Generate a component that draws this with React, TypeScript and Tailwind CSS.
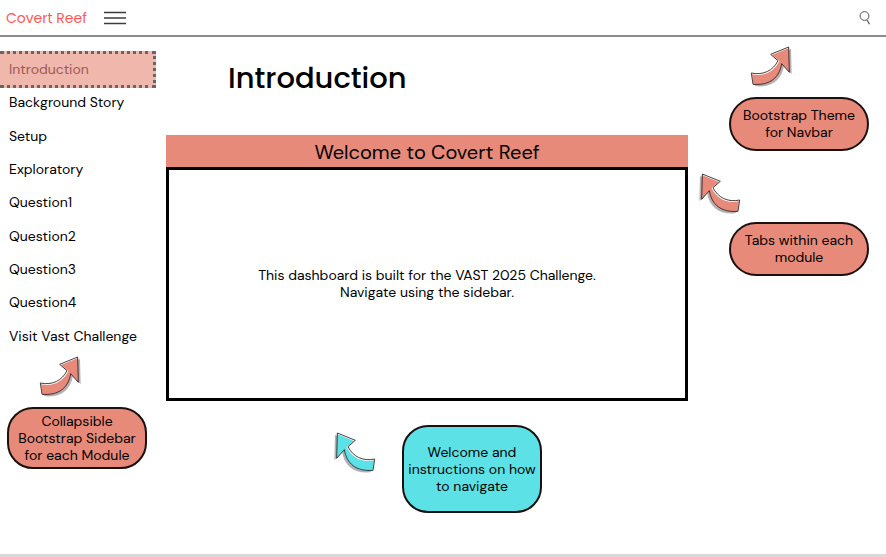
import { clsx } from "clsx";

const links = [
  "Introduction",
  "Background Story",
  "Setup",
  "Exploratory",
  "Question1",
  "Question2",
  "Question3",
  "Question4",
  "Visit Vast Challenge",
];

const arrowOutline =
  "M116 6 L62 28 L84 47 C70 76 40 92 4 84 L9 118 C60 122 88 98 95 56 L118 82 Z";

function Arrow({ fill, className }: { fill: string; className?: string }) {
  return (
    <svg
      viewBox="0 0 126 132"
      aria-hidden="true"
      className={clsx("h-11 w-[42px] shrink-0", className)}
    >
      <path d={arrowOutline} transform="translate(7 6)" fill="#b3b0b6" />
      <path d={arrowOutline} fill="#ffffff" />
      <path
        d="M117 9 L66 30 L88 48 C73 80 42 96 6 88 L10 119 C62 123 90 98 96 57 L119 83 Z"
        fill={fill}
      />
      <path d={arrowOutline} fill="none" stroke="#2b2224" strokeWidth="2.6" strokeLinejoin="round" />
    </svg>
  );
}

function Callout({ text, className }: { text: string; className?: string }) {
  return (
    <p
      className={clsx(
        "flex w-[140px] items-center justify-center whitespace-pre border-2 border-[#1a1010] text-center text-sm leading-[17px]",
        className,
      )}
    >
      {text}
    </p>
  );
}

export default function App() {
  return (
    <div className="flex min-h-screen flex-col bg-white font-['DM_Sans',Inter,sans-serif] text-black">
      <header className="flex h-[37px] items-center border-b-2 border-[#8c8c8c] pr-[15px] pl-1.5">
        <a href="#home" className="font-['Poppins',Inter,sans-serif] text-sm text-[#ff5757]">
          Covert Reef
        </a>
        <button type="button" aria-label="Toggle sidebar" className="ml-[17px]">
          <svg viewBox="0 0 22 14" className="h-3.5 w-[22px]" fill="none" stroke="#3c3c3f">
            <path d="M0 1.5H22M0 7H22M0 12.5H22" strokeWidth="1.3" />
          </svg>
        </button>
        <button type="button" aria-label="Search" className="ml-auto">
          <svg viewBox="0 0 12 14" className="h-3.5 w-3" fill="none" stroke="#555555">
            <circle cx="5.5" cy="5" r="4.4" />
            <path d="M8 9 L10.5 13.2" strokeWidth="1.2" />
          </svg>
        </button>
      </header>

      <div className="flex flex-1 items-start">
        <aside className="w-[156px] shrink-0 pt-4">
          <nav className="grid h-[300px] grid-rows-9">
            {links.map((label, i) => (
              <a
                key={label}
                href={"#" + label}
                aria-current={i === 0 ? "page" : undefined}
                className={clsx(
                  "flex items-center pb-px pl-[9px] text-sm",
                  i === 0 &&
                    "-my-0.5 border-y-3 border-r-3 border-dotted border-[#666666] bg-[#f0b7ad] text-[#9c5a50]",
                )}
              >
                {label}
              </a>
            ))}
          </nav>
          <Arrow fill="#e78a79" className="mt-0.5 ml-[39px]" />
          <Callout
            text={"Collapsible\nBootstrap Sidebar\nfor each Module"}
            className="mt-2 ml-[7px] h-[62px] rounded-[26px] bg-[#e78a79]"
          />
        </aside>

        <main className="ml-2.5 min-w-0 flex-1">
          <h1 className="mt-5 pl-[62px] font-['Poppins',Inter,sans-serif] text-[29px] leading-[42px] font-medium">
            Introduction
          </h1>
          <section className="mt-9">
            <h2 className="flex h-8 items-center justify-center bg-[#e78a79] pt-0.5 text-xl leading-7">
              Welcome to Covert Reef
            </h2>
            <p className="flex h-[234px] items-center justify-center border-3 border-black text-center text-sm leading-[17px]">
              This dashboard is built for the VAST 2025 Challenge.
              <br />
              Navigate using the sidebar.
            </p>
          </section>
          <div className="mt-6 flex items-start justify-center gap-[26px] pl-[22px]">
            <Arrow fill="#5ce1e6" className="mt-1.5 -scale-x-100" />
            <Callout
              text={"Welcome and\ninstructions on how\nto navigate"}
              className="h-[88px] rounded-[26px] bg-[#5ce1e6]"
            />
          </div>
        </main>

        <aside className="w-[198px] shrink-0 pt-2">
          <Arrow fill="#e78a79" className="ml-[62px]" />
          <Callout
            text={"Bootstrap Theme\nfor Navbar"}
            className="mt-2 ml-[41px] h-[54px] rounded-[27px] bg-[#e78a79]"
          />
          <Arrow fill="#e78a79" className="mt-[21px] ml-[11px] -scale-x-100" />
          <Callout
            text={"Tabs within each\nmodule"}
            className="mt-1.5 ml-[41px] h-[54px] rounded-[27px] bg-[#e78a79]"
          />
        </aside>
      </div>

      <footer className="h-[3px] bg-[#d9d9d9]" />
    </div>
  );
}
